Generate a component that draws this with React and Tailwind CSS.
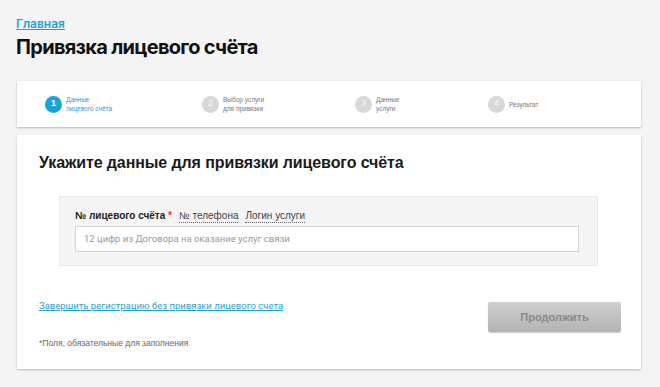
import React from 'react';

const steps = [
  { n: 1, label: ['Данные', 'лицевого счёта'], active: true, x: 'w-[157px]' },
  { n: 2, label: ['Выбор услуги', 'для привязки'], x: 'w-[153px]' },
  { n: 3, label: ['Данные', 'услуги'], x: 'w-[133px]' },
  { n: 4, label: ['Результат'], x: 'w-[120px]' },
];

export default function App() {
  return (
    <div className="min-h-[387px] w-[660px] bg-[#f4f4f4] font-['Liberation_Sans',Arial,sans-serif] text-[#222]">
      <div className="pl-4 pt-[16px]">
        <a href="#" className="block w-fit font-['Inter',sans-serif] text-[12px] font-semibold text-[#1ba3d8] underline leading-[16px]">
          Главная
        </a>
        <h1 className="mt-[1px] font-['Inter',sans-serif] text-[20px] font-bold leading-[28px] tracking-[-0.7px] text-[#111]">
          Привязка лицевого счёта
        </h1>
      </div>

      <div className="ml-[17px] mt-[20px] w-[624px] h-[46px] bg-white shadow-[0_1px_2px_rgba(0,0,0,0.25)] flex items-center pl-[28px]">
        {steps.map((s) => (
          <div key={s.n} className={`${s.x} flex items-center gap-[4px]`}>
            <span
              className={
                s.active
                  ? 'w-[17px] h-[17px] rounded-full bg-[#1ba3d8] text-white text-[9px] flex items-center justify-center font-bold'
                  : 'w-[17px] h-[17px] rounded-full bg-[#d8d8d8] text-[#fafafa] text-[9px] flex items-center justify-center'
              }
            >
              {s.n}
            </span>
            <span className={`text-[6.5px] leading-[9px] ${s.active ? 'text-[#1ba3d8]' : 'text-[#777]'}`}>
              {s.label.map((l) => (
                <span key={l} className="block">{l}</span>
              ))}
            </span>
          </div>
        ))}
      </div>

      <div className="ml-[17px] mt-[8px] w-[624px] h-[234px] bg-white shadow-[0_1px_2px_rgba(0,0,0,0.25)] pl-[22px] pt-[18px]">
        <h2 className="text-[16px] font-bold leading-[20px] tracking-[-0.1px] text-[#1a1a1a]">
          Укажите данные для привязки лицевого счёта
        </h2>

        <div className="ml-[20px] mt-[23px] w-[539px] h-[70px] bg-[#f5f5f5] border border-[#e8e8e8] pl-[15px] pt-[12px]">
          <div className="flex items-center gap-[7px] text-[10px] leading-[14px]">
            <span className="font-bold text-[#222]">
              № лицевого счёта <span className="text-[#e0364f]">*</span>
            </span>
            <span className="text-[#444] border-b border-dotted border-[#666] leading-[12px]">№ телефона</span>
            <span className="text-[#444] border-b border-dotted border-[#666] leading-[12px]">Логин услуги</span>
          </div>
          <div className="mt-[3px] w-[504px] h-[26px] bg-white border border-[#d4d4d4] flex items-center pl-[8px] font-['Roboto',sans-serif] text-[9.5px] text-[#999]">
            12 цифр из Договора на оказание услуг связи
          </div>
        </div>

        <div className="mt-[36px] flex items-start justify-between pr-[20px]">
          <a href="#" className="-mt-[3px] font-['Roboto',sans-serif] text-[9.5px] text-[#1ba3d8] underline leading-[14px]">
            Завершить регистрацию без привязки лицевого счета
          </a>
          <button className="w-[133px] h-[30px] rounded-[2px] bg-gradient-to-b from-[#cfcfcf] to-[#b3b3b3] shadow-[0_1px_1px_rgba(0,0,0,0.2)] text-[11px] font-bold text-[#8a8a8a]">
            Продолжить
          </button>
        </div>
        <p className="mt-[5px] text-[8.5px] text-[#666] leading-[12px]">*Поля, обязательные для заполнения</p>
      </div>
    </div>
  );
}
